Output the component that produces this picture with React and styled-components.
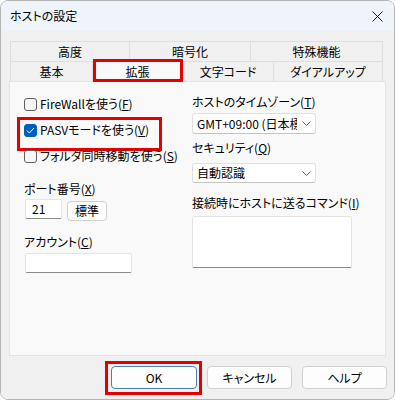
import React from "react";
import styled, { createGlobalStyle, css } from "styled-components";

const Global = createGlobalStyle`
  html, body { margin: 0; padding: 0; background: #ffffff; }
  * { box-sizing: border-box; }
`;

const Window = styled.div`
  width: 395px;
  height: 400px;
  border: 1px solid #b4b4b4;
  border-radius: 8px;
  overflow: hidden;
  display: flex;
  flex-direction: column;
  font-family: "Noto Sans CJK JP", "Noto Sans", sans-serif;
  font-feature-settings: "palt";
  font-size: 12px;
  color: #000;
`;

const TitleBar = styled.div`
  height: 30px;
  flex: none;
  background: #eef4f9;
  display: flex;
  align-items: center;
  justify-content: space-between;
  padding: 0 11px 0 9px;
`;

const Title = styled.span`
  font-size: 12px;
  line-height: 16px;
`;

const Body = styled.div`
  flex: 1;
  background: #f0f0f0;
  padding: 10px 8px 0 8px;
  display: flex;
  flex-direction: column;
`;

const TabStrip = styled.div`
  display: flex;
  flex-direction: column;
  padding: 0 2px 0 1px;
`;

const TabRow = styled.div`
  display: flex;
  height: 20px;
`;

const Tab = styled.div`
  flex: 0 0 ${(p) => p.$w}px;
  height: 20px;
  border: 1px solid #dedede;
  border-bottom: none;
  background: #f0f0f0;
  display: flex;
  align-items: center;
  justify-content: center;
  line-height: 16px;
  & + & { border-left: none; }
  ${(p) =>
    p.$active &&
    css`
      background: #f9f9f9;
      height: 21px;
      position: relative;
      z-index: 1;
      &::after {
        content: "";
        position: absolute;
        top: -3px;
        left: 0;
        right: -1px;
        bottom: 0;
        border: 3px solid #e50000;
      }
    `}
`;

const Panel = styled.div`
  height: 275px;
  border: 1px solid #e3e3e3;
  background: #f9f9f9;
  display: grid;
  grid-template-columns: 168px 1fr;
  align-items: start;
  padding: 9px 0 0 14px;
`;

const Column = styled.div`
  display: flex;
  flex-direction: column;
  align-items: flex-start;
`;

const CheckRow = styled.div`
  height: 26px;
  display: flex;
  align-items: center;
  gap: 3px;
  position: relative;
  line-height: 16px;
  ${(p) =>
    p.$marked &&
    css`
      &::after {
        content: "";
        position: absolute;
        left: -7px;
        top: 0;
        width: 139px;
        height: 28px;
        border: 3px solid #e50000;
      }
    `}
`;

const Box = styled.span`
  width: 13px;
  height: 13px;
  border-radius: 3px;
  border: 1px solid ${(p) => (p.$checked ? "#005fb8" : "#5f5f5f")};
  background: ${(p) => (p.$checked ? "#005fb8" : "#f7f7f7")};
  display: inline-flex;
  align-items: center;
  justify-content: center;
  flex: none;
`;

const Label = styled.div`
  line-height: 16px;
  margin-top: ${(p) => p.$mt || 0}px;
  white-space: nowrap;
`;

const Field = styled.div`
  width: ${(p) => p.$w}px;
  height: ${(p) => p.$h || 20}px;
  margin-top: ${(p) => p.$mt || 0}px;
  margin-left: ${(p) => p.$ml || 0}px;
  background: #ffffff;
  border: 1px solid #e3e3e3;
  border-bottom-color: #8a8a8a;
  border-radius: 2px;
  padding: 0 6px;
  display: flex;
  align-items: center;
  line-height: 16px;
`;

const PortRow = styled.div`
  display: flex;
  align-items: flex-start;
  gap: 5px;
  margin-top: 2px;
`;

const SmallButton = styled.button`
  width: 40px;
  height: 20px;
  margin-top: 2px;
  background: #fdfdfd;
  border: 1px solid #d0d0d0;
  border-radius: 4px;
  font: inherit;
  font-size: 12px;
  padding: 0;
  color: #000;
  line-height: 16px;
`;

const Select = styled.div`
  width: 124px;
  height: ${(p) => p.$h}px;
  margin-top: ${(p) => p.$mt}px;
  background: #ffffff;
  border: 1px solid #e0e0e0;
  border-bottom-color: #c4c4c4;
  border-radius: 3px;
  display: flex;
  align-items: center;
`;

const SelectText = styled.span`
  flex: 1;
  padding-left: 4px;
  overflow: hidden;
  white-space: nowrap;
  line-height: 16px;
`;

const Chevron = styled.span`
  width: 18px;
  flex: none;
  display: flex;
  justify-content: center;
  align-items: center;
`;

const Footer = styled.div`
  display: flex;
  justify-content: flex-end;
  gap: 10px;
  padding-top: 10px;
  margin-right: -1px;
`;

const Button = styled.button`
  width: ${(p) => p.$w}px;
  height: 23px;
  background: #fdfdfd;
  border: 1px solid ${(p) => (p.$default ? "#4d7fb4" : "#d0d0d0")};
  border-radius: 4px;
  font: inherit;
  font-size: 12px;
  color: #000;
  padding: 0;
  position: relative;
  line-height: 16px;
  ${(p) =>
    p.$marked &&
    css`
      &::after {
        content: "";
        position: absolute;
        inset: -6px -6px -7px -7px;
        border: 3px solid #e50000;
      }
    `}
`;

const Check = ({ checked }) => (
  <Box $checked={checked}>
    {checked && (
      <svg width="9" height="7" viewBox="0 0 9 7">
        <path d="M1 3.6 L3.4 6 L8 1" fill="none" stroke="#ffffff" strokeWidth="1" />
      </svg>
    )}
  </Box>
);

const Down = () => (
  <Chevron>
    <svg width="9" height="5" viewBox="0 0 9 5">
      <path d="M0.5 0.5 L4.5 4.5 L8.5 0.5" fill="none" stroke="#5c5c5c" strokeWidth="1" />
    </svg>
  </Chevron>
);

export default function App() {
  return (
    <>
      <Global />
      <Window>
        <TitleBar>
          <Title>ホストの設定</Title>
          <svg width="11" height="11" viewBox="0 0 11 11">
            <path d="M0.5 0.5 L10.5 10.5 M10.5 0.5 L0.5 10.5" stroke="#1b1b1b" strokeWidth="1" />
          </svg>
        </TitleBar>
        <Body>
          <TabStrip>
            <TabRow>
              <Tab $w={120}>高度</Tab>
              <Tab $w={121}>暗号化</Tab>
              <Tab $w={132}>特殊機能</Tab>
            </TabRow>
            <TabRow>
              <Tab $w={83}>基本</Tab>
              <Tab $w={90} $active>拡張</Tab>
              <Tab $w={91}>文字コード</Tab>
              <Tab $w={109}>ダイアルアップ</Tab>
            </TabRow>
          </TabStrip>
          <Panel>
            <Column>
              <CheckRow>
                <Check />
                <span>FireWallを使う(<u>F</u>)</span>
              </CheckRow>
              <CheckRow $marked>
                <Check checked />
                <span>PASVモードを使う(<u>V</u>)</span>
              </CheckRow>
              <CheckRow>
                <Check />
                <span>フォルダ同時移動を使う(<u>S</u>)</span>
              </CheckRow>
              <Label $mt={12}>ポート番号(<u>X</u>)</Label>
              <PortRow>
                <Field $w={37} $ml={1}>21</Field>
                <SmallButton>標準</SmallButton>
              </PortRow>
              <Label $mt={13}>アカウント(<u>C</u>)</Label>
              <Field $w={107} $ml={1} $mt={3} />
            </Column>
            <Column>
              <Label $mt={3}>ホストのタイムゾーン(<u>T</u>)</Label>
              <Select $h={21} $mt={3}>
                <SelectText>GMT+09:00 (日本標準時)</SelectText>
                <Down />
              </Select>
              <Label $mt={6}>セキュリティ(<u>Q</u>)</Label>
              <Select $h={20} $mt={7}>
                <SelectText>自動認識</SelectText>
                <Down />
              </Select>
              <Label $mt={12}>接続時にホストに送るコマンド(<u>I</u>)</Label>
              <Field $w={160} $h={52} $mt={5} />
            </Column>
          </Panel>
          <Footer>
            <Button $w={86} $default $marked>OK</Button>
            <Button $w={85}>キャンセル</Button>
            <Button $w={85}>ヘルプ</Button>
          </Footer>
        </Body>
      </Window>
    </>
  );
}
